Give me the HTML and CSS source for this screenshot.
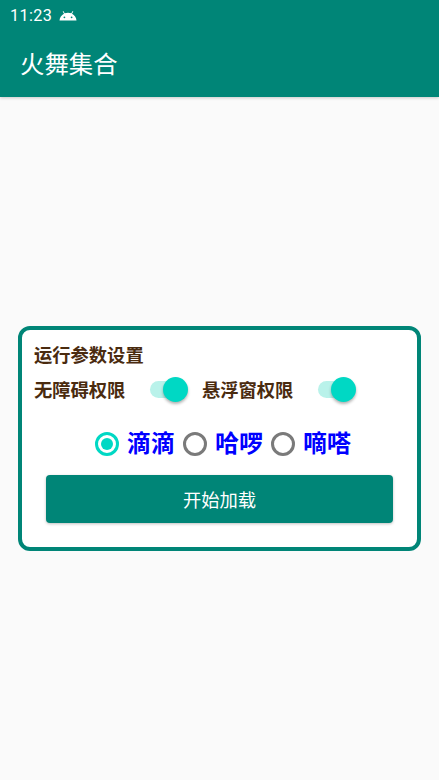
FILE: index.html
```html
<!DOCTYPE html>
<html lang="zh-CN">
<head>
    <meta charset="UTF-8">
    <meta name="viewport" content="width=device-width, initial-scale=1.0">
    <title>火舞集合</title>
    <link rel="stylesheet" href="styles.css">
</head>
<body>
    <div class="header">
        <div class="status-bar">
            <span class="clock">11:23</span>
            <svg class="android" viewBox="0 0 18 11" width="18" height="11">
                <path d="M0.5 10.5C0.8 7.4 2.4 5 5 3.7L3.7 1.4l.6-.4L5.7 3.3C6.7 2.9 7.8 2.7 9 2.7s2.3.2 3.3.6L13.7 1l.6.4L13 3.7c2.6 1.3 4.2 3.7 4.5 6.8z" fill="#fff"/>
                <circle cx="5.4" cy="7.3" r="0.9" fill="#008577"/>
                <circle cx="12.6" cy="7.3" r="0.9" fill="#008577"/>
            </svg>
        </div>
        <div class="app-bar">火舞集合</div>
    </div>

    <div class="main">
        <div class="card">
            <div class="card-title">运行参数设置</div>
            <div class="switch-row">
                <div class="switch-item">
                    <span class="switch-label">无障碍权限</span>
                    <span class="switch"><span class="switch-thumb"></span></span>
                </div>
                <div class="switch-item">
                    <span class="switch-label">悬浮窗权限</span>
                    <span class="switch"><span class="switch-thumb"></span></span>
                </div>
            </div>
            <div class="radio-row">
                <div class="radio-item">
                    <span class="radio checked"></span>
                    <span class="radio-label">滴滴</span>
                </div>
                <div class="radio-item">
                    <span class="radio"></span>
                    <span class="radio-label">哈啰</span>
                </div>
                <div class="radio-item">
                    <span class="radio"></span>
                    <span class="radio-label">嘀嗒</span>
                </div>
            </div>
            <button class="start-button">开始加载</button>
        </div>
    </div>
</body>
</html>
```

FILE: styles.css
```css
* {
    box-sizing: border-box;
}
html, body {
    height: 100%;
}
body {
    margin: 0;
    display: flex;
    flex-direction: column;
    background-color: #fafafa;
    font-family: Roboto, "Noto Sans CJK SC", sans-serif;
}
.header {
    height: 97px;
    background-color: #008577;
    color: white;
    box-shadow: 0 1px 3px rgba(0, 0, 0, 0.2);
}
.status-bar {
    height: 29px;
    padding: 2px 0 0 10px;
    display: flex;
    align-items: center;
}
.clock {
    font-size: 16.2px;
    letter-spacing: 0.4px;
}
.android {
    margin: 0 0 0 7px;
}
.app-bar {
    height: 68px;
    padding: 0 20px 2px;
    display: flex;
    align-items: center;
    font-size: 24.4px;
}
.main {
    flex: 1;
    display: flex;
    align-items: center;
    justify-content: center;
}
.card {
    width: 403px;
    height: 225px;
    padding: 15px 12px 0;
    background-color: white;
    border: 4px solid #008577;
    border-radius: 12px;
}
.card-title {
    height: 22px;
    line-height: 22px;
    font-size: 18.3px;
    font-weight: 700;
    color: #4a2b0f;
}
.switch-row {
    display: flex;
    margin-top: 9px;
}
.switch-item {
    display: flex;
    align-items: center;
    height: 26px;
    margin-right: 17px;
}
.switch-label {
    width: 116px;
    font-size: 18.3px;
    font-weight: 700;
    color: #4a2b0f;
}
.switch {
    position: relative;
    width: 35px;
    height: 17px;
    border-radius: 9px;
    background-color: #b9f2ea;
}
.switch-thumb {
    position: absolute;
    top: -4px;
    right: -3px;
    width: 25px;
    height: 25px;
    border-radius: 50%;
    background-color: #00d8c4;
    box-shadow: 0 2px 3px rgba(0, 0, 0, 0.3);
}
.radio-row {
    display: flex;
    justify-content: center;
    gap: 8px;
    margin-top: 26px;
    padding-left: 7px;
}
.radio-item {
    display: flex;
    align-items: center;
    gap: 8px;
}
.radio {
    position: relative;
    width: 24px;
    height: 24px;
    border: 3px solid #7a7a7a;
    border-radius: 50%;
}
.radio.checked {
    border-color: #00d8c4;
}
.radio.checked::after {
    content: "";
    position: absolute;
    top: 3px;
    left: 3px;
    width: 12px;
    height: 12px;
    border-radius: 50%;
    background-color: #00d8c4;
}
.radio-label {
    font-size: 24px;
    line-height: 32px;
    font-weight: bold;
    color: #0000ff;
}
.start-button {
    display: block;
    width: 347px;
    height: 48px;
    margin: 15px 0 0 12px;
    border: none;
    border-radius: 4px;
    background-color: #008577;
    color: white;
    font-family: inherit;
    font-size: 18.3px;
    box-shadow: 0 1px 3px rgba(0, 0, 0, 0.25);
}
```
